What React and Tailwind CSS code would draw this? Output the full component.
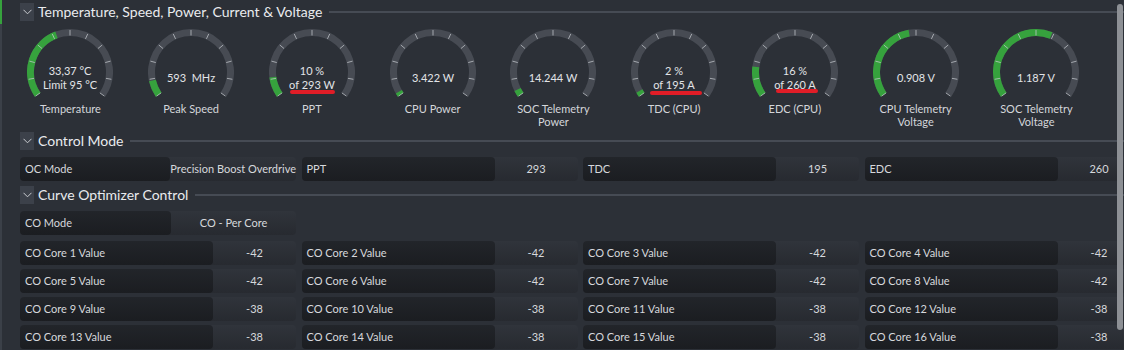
import React from 'react';

const FONT = { fontFamily: 'Lato, "Noto Sans", sans-serif' };

const gauges = [
  { lines: ['33,37 °C', 'Limit 95 °C'], label: ['Temperature'], frac: 0.42 },
  { lines: ['593\u00a0\u00a0MHz'], label: ['Peak Speed'], frac: 0.09 },
  { lines: ['10 %', 'of 293 W'], label: ['PPT'], frac: 0.11, mark: 'left-[21px] top-[63px] w-[45px]' },
  { lines: ['3.422 W'], label: ['CPU Power'], frac: 0.02 },
  { lines: ['14.244 W'], label: ['SOC Telemetry', 'Power'], frac: 0.035 },
  { lines: ['2 %', 'of 195 A'], label: ['TDC (CPU)'], frac: 0.025, mark: 'left-[19px] top-[64px] w-[52px]' },
  { lines: ['16 %', 'of 260 A'], label: ['EDC (CPU)'], frac: 0.17, mark: 'left-[24px] top-[62px] w-[42px]' },
  { lines: ['0.908 V'], label: ['CPU Telemetry', 'Voltage'], frac: 0.46 },
  { lines: ['1.187 V'], label: ['SOC Telemetry', 'Voltage'], frac: 0.59 },
];

const coreValues = [-42, -42, -42, -42, -42, -42, -42, -42, -38, -38, -38, -38, -38, -38, -38, -38];

// gauge geometry
const CX = 43;
const CY = 45;
const R = 39.5;
const START = 145;
const SWEEP = 250;

function polar(deg, r = R) {
  const a = (deg * Math.PI) / 180;
  return [CX + r * Math.cos(a), CY + r * Math.sin(a)];
}

function arc(from, to) {
  const [x1, y1] = polar(from);
  const [x2, y2] = polar(to);
  const large = to - from > 180 ? 1 : 0;
  return `M ${x1} ${y1} A ${R} ${R} 0 ${large} 1 ${x2} ${y2}`;
}

function Gauge({ g }) {
  const ticks = Array.from({ length: 11 }, (_, i) => START + i * 25);
  return (
    <div className="flex flex-col items-center">
      <div className="relative w-[86px] h-[72px]">
        <svg width="86" height="72" viewBox="0 0 86 72">
          <path d={arc(START, START + SWEEP)} fill="none" stroke="#474b53" strokeWidth="7" />
          <path d={arc(START, START + SWEEP * g.frac)} fill="none" stroke="#36a23d" strokeWidth="7" />
          {ticks.map((t) => {
            const [x1, y1] = polar(t, 36.5);
            const [x2, y2] = polar(t, 42);
            return <line key={t} x1={x1} y1={y1} x2={x2} y2={y2} stroke="#c4c8cd" strokeWidth="1" strokeOpacity="0.75" />;
          })}
          {g.lines.length === 1 ? (
            <text x={CX} y={50} textAnchor="middle" dominantBaseline="central" fontSize="11" fill="#e2e4e7" style={FONT}>
              {g.lines[0]}
            </text>
          ) : (
            <>
              <text x={CX} y={43} textAnchor="middle" dominantBaseline="central" fontSize="11" fill="#e2e4e7" style={FONT}>
                {g.lines[0]}
              </text>
              <text x={CX} y={57} textAnchor="middle" dominantBaseline="central" fontSize="11" fill="#e2e4e7" style={FONT}>
                {g.lines[1]}
              </text>
            </>
          )}
        </svg>
        {g.mark && <div className={`absolute h-[4px] rounded-full bg-[#e11d27] ${g.mark}`} />}
      </div>
      <div className="mt-[3px] text-[11px] leading-[13px] text-[#d4d6da] text-center">
        {g.label.map((l) => (
          <div key={l}>{l}</div>
        ))}
      </div>
    </div>
  );
}

function Header({ title, className = '' }) {
  return (
    <div className={`flex items-center h-[18px] ml-[20px] ${className}`}>
      <div className="w-[14px] h-[18px] bg-[#3c414a] flex items-center justify-center">
        <svg width="9" height="6" viewBox="0 0 9 6">
          <path d="M0.5 0.8 L4.5 4.8 L8.5 0.8" fill="none" stroke="#c9ccd1" strokeWidth="1" />
        </svg>
      </div>
      <span className="ml-[4px] text-[14px] leading-[18px] text-[#e9ebee] whitespace-nowrap">{title}</span>
      <div className="ml-[7px] flex-1 h-[2px] bg-[#464b54]" />
    </div>
  );
}

function Cell({ label, value, wide }) {
  return (
    <div className="flex h-[24px] rounded-[4px] bg-gradient-to-b from-[#30343b] to-[#272a30] text-[11px] text-[#d6d8dc]">
      <div
        className={`${wide ? 'w-[151px]' : 'w-[193px]'} h-full rounded-[4px] bg-gradient-to-b from-[#22252a] to-[#1b1d21] pl-[5px] flex items-center whitespace-nowrap`}
      >
        {label}
      </div>
      <div className="flex-1 flex items-center justify-center whitespace-nowrap">{value}</div>
    </div>
  );
}

const gridCls = 'ml-[20px] grid grid-cols-[repeat(4,276px)] gap-x-[5.5px]';

export default function App() {
  return (
    <div className="relative w-[1124px] h-[350px] overflow-hidden bg-[#2c3037] flex" style={FONT}>
      {/* window edge */}
      <div className="w-[2px] h-full bg-[#3b4048] shrink-0">
        <div className="h-[24px] bg-[#36a23d]" />
      </div>

      <div className="flex-1 min-w-0 -ml-[2px]">
        <Header title="Temperature, Speed, Power, Current & Voltage" className="mt-[3px]" />

        <div className="ml-[10px] mt-[6px] grid grid-cols-[repeat(9,120.75px)] items-start h-[101px]">
          {gauges.map((g, i) => (
            <Gauge key={i} g={g} />
          ))}
        </div>

        <Header title="Control Mode" className="mt-[4px]" />
        <div className={`${gridCls} mt-[7px]`}>
          <Cell label="OC Mode" value="Precision Boost Overdrive" wide />
          <Cell label="PPT" value="293" />
          <Cell label="TDC" value="195" />
          <Cell label="EDC" value="260" />
        </div>

        <Header title="Curve Optimizer Control" className="mt-[5px]" />
        <div className={`${gridCls} mt-[7px]`}>
          <Cell label="CO Mode" value="CO - Per Core" wide />
        </div>
        <div className={`${gridCls} mt-[6px] gap-y-[4px]`}>
          {coreValues.map((v, i) => (
            <Cell key={i} label={`CO Core ${i + 1} Value`} value={v} />
          ))}
        </div>
      </div>

      {/* scrollbar thumb */}
      <div className="absolute right-[1px] top-[4px] w-[6px] h-[326px] rounded-full bg-[#8d9095]" />
    </div>
  );
}
